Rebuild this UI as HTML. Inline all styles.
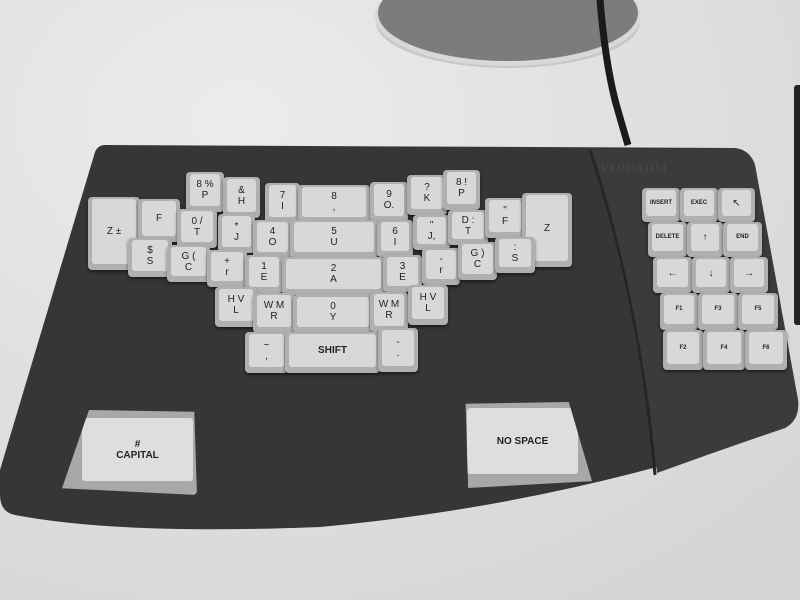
<!DOCTYPE html>
<html><head><meta charset="utf-8"><style>
body{margin:0;width:800px;height:600px;overflow:hidden;background:#e2e2e2;font-family:"Liberation Sans",sans-serif;position:relative}
.k{position:absolute;background:#b0b0b0;border-radius:4px;box-shadow:0 2px 3px rgba(0,0,0,.5)}
.k i{position:absolute;left:4px;right:4px;top:2px;bottom:6px;background:#d8d8d8;border-radius:3px;display:flex;align-items:center;justify-content:center;font-style:normal;font-size:10px;color:#222;text-align:center;line-height:11px}
.s i{font-size:6px;font-weight:bold}
.b i{font-weight:bold;font-size:10px}
</style></head><body>
<svg width="800" height="600" style="position:absolute;left:0;top:0">
<defs><radialGradient id="bg" cx="0.3" cy="0.2" r="1"><stop offset="0" stop-color="#ececec"/><stop offset="1" stop-color="#d4d4d4"/></radialGradient></defs>
<rect width="800" height="600" fill="url(#bg)"/>
<ellipse cx="508" cy="22" rx="132" ry="46" fill="#c8c8c8"/>
<ellipse cx="508" cy="16" rx="133" ry="50" fill="#d8d8d8"/>
<ellipse cx="508" cy="13" rx="130" ry="48" fill="#7c7c7c"/>
<path d="M600 0 Q605 60 615 100 Q622 125 628 145" stroke="#1a1a1a" stroke-width="7" fill="none"/>
<rect x="794" y="85" width="8" height="240" rx="3" fill="#222"/>
<path d="M105 145 L735 148 Q750 150 755 165 L798 400 Q800 420 785 428 Q560 505 320 527 Q120 535 15 515 Q0 512 0 495 L0 470 L95 152 Q98 145 105 145 Z" fill="#363636"/>
<path d="M590 150 Q640 300 655 475" stroke="#262626" stroke-width="3" fill="none"/>
<path d="M592 150 L735 148 Q750 150 755 165 L798 400 Q800 420 785 428 Q720 450 657 473 Q640 300 592 150Z" fill="#3b3b3b"/>
<text x="600" y="172" font-size="13" fill="#4a4a4a" font-family="Liberation Serif">VERBATIM</text>
</svg>

<div class="k" style="left:88px;top:197px;width:52px;height:73px"><i>Z ±</i></div>
<div class="k" style="left:138px;top:199px;width:42px;height:43px"><i>F</i></div>
<div class="k" style="left:186px;top:172px;width:38px;height:40px"><i>8 %<br>P</i></div>
<div class="k" style="left:223px;top:177px;width:37px;height:41px"><i>&amp;<br>H</i></div>
<div class="k" style="left:265px;top:183px;width:35px;height:40px"><i>7<br>I</i></div>
<div class="k" style="left:298px;top:185px;width:72px;height:38px"><i>8<br>,</i></div>
<div class="k" style="left:370px;top:182px;width:38px;height:40px"><i>9<br>O.</i></div>
<div class="k" style="left:407px;top:175px;width:40px;height:40px"><i>?<br>K</i></div>
<div class="k" style="left:443px;top:170px;width:37px;height:40px"><i>8 !<br>P</i></div>
<div class="k" style="left:177px;top:209px;width:40px;height:39px"><i>0 /<br>T</i></div>
<div class="k" style="left:218px;top:214px;width:37px;height:39px"><i>*<br>J</i></div>
<div class="k" style="left:253px;top:220px;width:39px;height:38px"><i>4<br>O</i></div>
<div class="k" style="left:290px;top:220px;width:88px;height:38px"><i>5<br>U</i></div>
<div class="k" style="left:377px;top:220px;width:36px;height:37px"><i>6<br>I</i></div>
<div class="k" style="left:413px;top:215px;width:37px;height:35px"><i>"<br>J,</i></div>
<div class="k" style="left:448px;top:210px;width:40px;height:35px"><i>D :<br>T</i></div>
<div class="k" style="left:485px;top:198px;width:40px;height:40px"><i>"<br>F</i></div>
<div class="k" style="left:522px;top:193px;width:50px;height:74px"><i>Z</i></div>
<div class="k" style="left:128px;top:238px;width:44px;height:39px"><i>$<br>S</i></div>
<div class="k" style="left:167px;top:245px;width:43px;height:37px"><i>G (<br>C</i></div>
<div class="k" style="left:207px;top:250px;width:40px;height:37px"><i>+<br>r</i></div>
<div class="k" style="left:245px;top:255px;width:38px;height:38px"><i>1<br>E</i></div>
<div class="k" style="left:282px;top:257px;width:103px;height:38px"><i>2<br>A</i></div>
<div class="k" style="left:383px;top:255px;width:39px;height:37px"><i>3<br>E</i></div>
<div class="k" style="left:422px;top:248px;width:38px;height:37px"><i>-<br>r</i></div>
<div class="k" style="left:458px;top:242px;width:39px;height:38px"><i>G )<br>C</i></div>
<div class="k" style="left:495px;top:237px;width:40px;height:36px"><i>:<br>S</i></div>
<div class="k" style="left:215px;top:287px;width:42px;height:40px"><i>H V<br>L</i></div>
<div class="k" style="left:253px;top:293px;width:42px;height:40px"><i>W M<br>R</i></div>
<div class="k" style="left:293px;top:295px;width:80px;height:38px"><i>0<br>Y</i></div>
<div class="k" style="left:370px;top:292px;width:38px;height:40px"><i>W M<br>R</i></div>
<div class="k" style="left:408px;top:285px;width:40px;height:40px"><i>H V<br>L</i></div>
<div class="k" style="left:245px;top:332px;width:43px;height:41px"><i>~<br>,</i></div>
<div class="k b" style="left:285px;top:332px;width:95px;height:41px"><i>SHIFT</i></div>
<div class="k" style="left:378px;top:328px;width:40px;height:44px"><i>-<br>.</i></div>

<div class="k b" style="left:62px;top:410px;width:135px;height:85px;clip-path:polygon(20% 0,98% 2%,100% 100%,0 92%);background:#a8a8a8"><i style="top:8px;bottom:14px;left:20px;background:#dedede">#<br>CAPITAL</i></div>
<div class="k b" style="left:463px;top:402px;width:129px;height:86px;clip-path:polygon(2% 2%,82% 0,100% 92%,4% 100%);background:#a8a8a8"><i style="top:6px;bottom:14px;right:14px;background:#dedede">NO SPACE</i></div>

<div class="k s" style="left:642px;top:188px;width:38px;height:34px"><i>INSERT</i></div>
<div class="k s" style="left:680px;top:188px;width:38px;height:34px"><i>EXEC</i></div>
<div class="k" style="left:718px;top:188px;width:37px;height:34px"><i>↖</i></div>
<div class="k s" style="left:648px;top:222px;width:39px;height:35px"><i>DELETE</i></div>
<div class="k" style="left:687px;top:222px;width:36px;height:35px"><i>↑</i></div>
<div class="k s" style="left:723px;top:222px;width:39px;height:35px"><i>END</i></div>
<div class="k" style="left:653px;top:257px;width:39px;height:36px"><i>←</i></div>
<div class="k" style="left:692px;top:257px;width:38px;height:36px"><i>↓</i></div>
<div class="k" style="left:730px;top:257px;width:38px;height:36px"><i>→</i></div>
<div class="k s" style="left:660px;top:293px;width:38px;height:37px"><i>F1</i></div>
<div class="k s" style="left:698px;top:293px;width:40px;height:37px"><i>F3</i></div>
<div class="k s" style="left:738px;top:293px;width:40px;height:37px"><i>F5</i></div>
<div class="k s" style="left:663px;top:330px;width:40px;height:40px"><i>F2</i></div>
<div class="k s" style="left:703px;top:330px;width:42px;height:40px"><i>F4</i></div>
<div class="k s" style="left:745px;top:330px;width:42px;height:40px"><i>F6</i></div>
</body></html>
